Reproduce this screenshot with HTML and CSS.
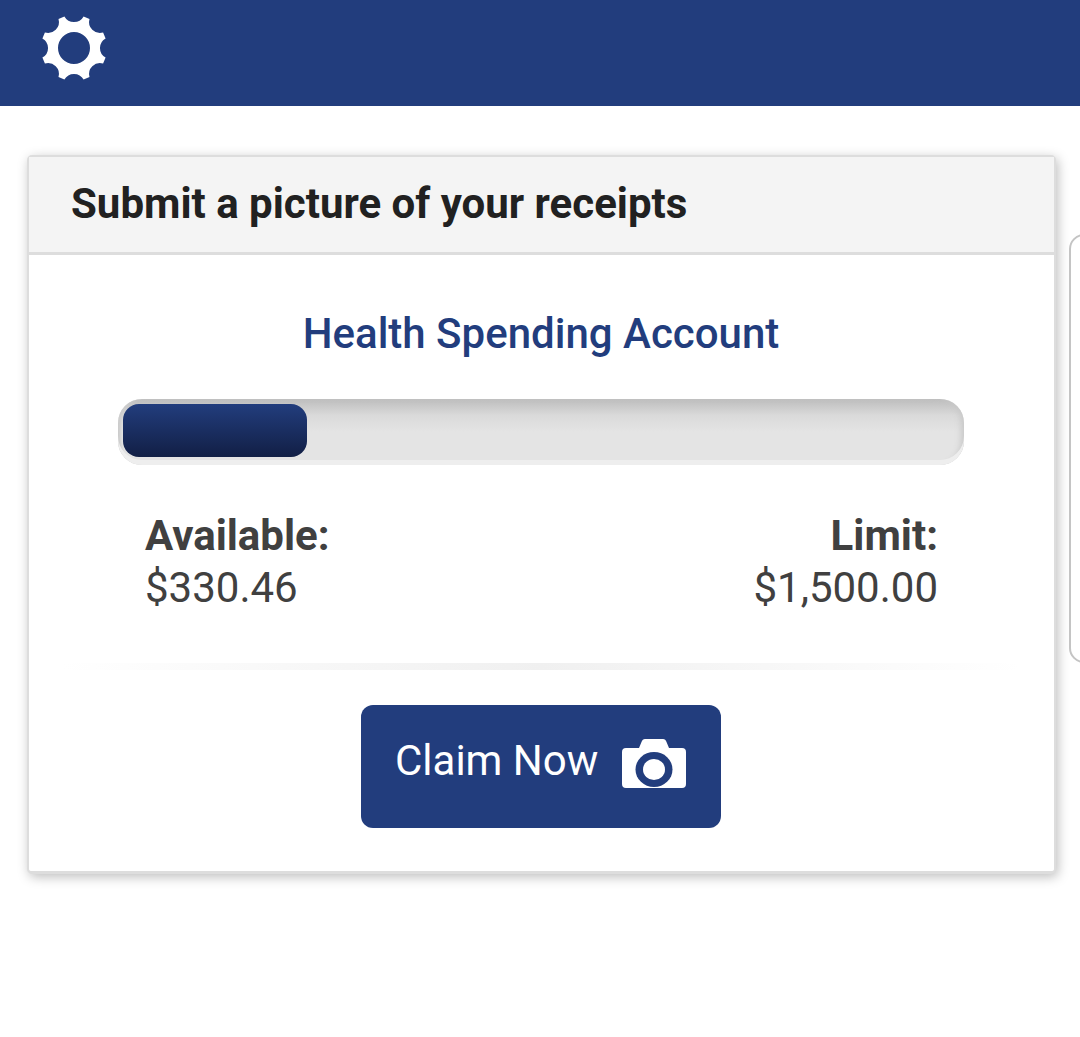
FILE: index.html
```html
<!DOCTYPE html>
<html lang="en">
<head>
  <meta charset="UTF-8">
  <meta name="viewport" content="width=device-width, initial-scale=1.0">
  <title>Submit a picture of your receipts</title>
  <link rel="stylesheet" href="styles.css">
</head>
<body>

  <!-- Top bar -->
  <header class="topbar">
    <svg class="gear" viewBox="-34 -34 68 68" aria-hidden="true">
      <path fill-rule="evenodd" d="M9.6 -31.6L15.5 -29.1A11 11 0 0 0 29.1 -15.5L31.6 -9.6A11 11 0 0 0 31.6 9.6L29.1 15.5A11 11 0 0 0 15.5 29.1L9.6 31.6A11 11 0 0 0 -9.6 31.6L-15.5 29.1A11 11 0 0 0 -29.1 15.5L-31.6 9.6A11 11 0 0 0 -31.6 -9.6L-29.1 -15.5A11 11 0 0 0 -15.5 -29.1L-9.6 -31.6A11 11 0 0 0 9.6 -31.6ZM16 0A16 16 0 1 0 -16 0A16 16 0 1 0 16 0Z"/>
    </svg>
  </header>

  <!-- Card -->
  <section class="card">
    <h2 class="card-title">Submit a picture of your receipts</h2>
    <div class="card-body">
      <h3 class="account-name">Health Spending Account</h3>
      <div class="bar">
        <div class="bar-fill" style="width: 184px;"></div>
      </div>
      <div class="stats">
        <div class="stat">
          <strong>Available:</strong>
          <span>$330.46</span>
        </div>
        <div class="stat stat-right">
          <strong>Limit:</strong>
          <span>$1,500.00</span>
        </div>
      </div>
      <div class="divider"></div>
      <button class="claim-btn" type="button">
        Claim Now
        <svg class="camera" viewBox="0 0 64 49" aria-hidden="true">
          <path d="M24 0H41Q43.500 0 44.500 3L47 9H60Q64 9 64 13V45Q64 49 60 49H4Q0 49 0 45V13Q0 9 4 9H17L19.500 3Q20.500 0 23 0Z"/>
          <ellipse class="lens-ring" cx="32" cy="30.500" rx="18.500" ry="17.500"/>
          <ellipse cx="32" cy="30.500" rx="11" ry="10.500"/>
        </svg>
      </button>
    </div>
  </section>

  <!-- Next card peeking in at the right edge -->
  <div class="next-card"></div>

</body>
</html>
```

FILE: styles.css
```css
* {
  box-sizing: border-box;
}
html, body {
  margin: 0;
  padding: 0;
}
body {
  position: relative;
  height: 1037px;
  overflow: hidden;
  background-color: #fff;
  font-family: Roboto, "Liberation Sans", sans-serif;
  color: #404040;
}
.topbar {
  height: 106px;
  padding: 14px 0 0 40px;
  background-color: #223d7d;
}
.gear {
  display: block;
  width: 68px;
  height: 68px;
  fill: #fff;
}
.card {
  width: 1029px;
  margin: 49px 0 0 27px;
  background-color: #fff;
  border: 2px solid #ddd;
  border-bottom-width: 3px;
  border-radius: 5px;
  box-shadow: 2px 3px 12px rgba(0, 0, 0, 0.26);
}
.card-title {
  height: 98px;
  margin: 0;
  padding-left: 42px;
  background-color: #f4f4f4;
  border-bottom: 3px solid #ddd;
  color: #212121;
  font-size: 42px;
  font-weight: 700;
  line-height: 94px;
}
.card-body {
  display: flex;
  flex-direction: column;
  align-items: center;
  padding: 51px 1px 43px 0;
}
.account-name {
  margin: 0;
  color: #223d7d;
  font-size: 42px;
  font-weight: 500;
  line-height: 56px;
}
.bar {
  width: 846px;
  height: 66px;
  margin-top: 37px;
  padding: 5px;
  background: linear-gradient(#bdbdbd, #dadada 25%, #e4e4e4 50%);
  border-radius: 24px;
  box-shadow: inset 0 -5px 0 #eee, inset 5px 0 3px -2px #ccc, inset -6px 0 6px -3px #c8c8c8;
}
.bar-fill {
  height: 53px;
  background: linear-gradient(#223d7d, #121f45);
  border-radius: 16px;
}
.stats {
  display: flex;
  justify-content: space-between;
  width: 793px;
  margin: 45px 0 0 1px;
  font-size: 42px;
  line-height: 52px;
}
.stat {
  display: flex;
  flex-direction: column;
}
.stat-right {
  text-align: right;
}
.divider {
  width: 960px;
  height: 7px;
  margin-top: 49px;
  background: linear-gradient(to right, #fff, #f0f0f0 50%, #fff);
}
.claim-btn {
  display: flex;
  align-items: center;
  justify-content: space-between;
  width: 360px;
  height: 123px;
  margin-top: 35px;
  padding: 0 35px 12px 34px;
  background-color: #223d7d;
  border: none;
  border-radius: 12px;
  color: #fff;
  font-family: inherit;
  font-size: 42px;
  white-space: nowrap;
}
.camera {
  flex: none;
  width: 64px;
  height: 49px;
  margin-top: 5px;
  fill: #fff;
}
.lens-ring {
  fill: #223d7d;
}
.next-card {
  position: absolute;
  top: 234px;
  left: 1069px;
  width: 30px;
  height: 429px;
  background-color: #fff;
  border: 2px solid #c4c4c4;
  border-radius: 16px;
}
```
